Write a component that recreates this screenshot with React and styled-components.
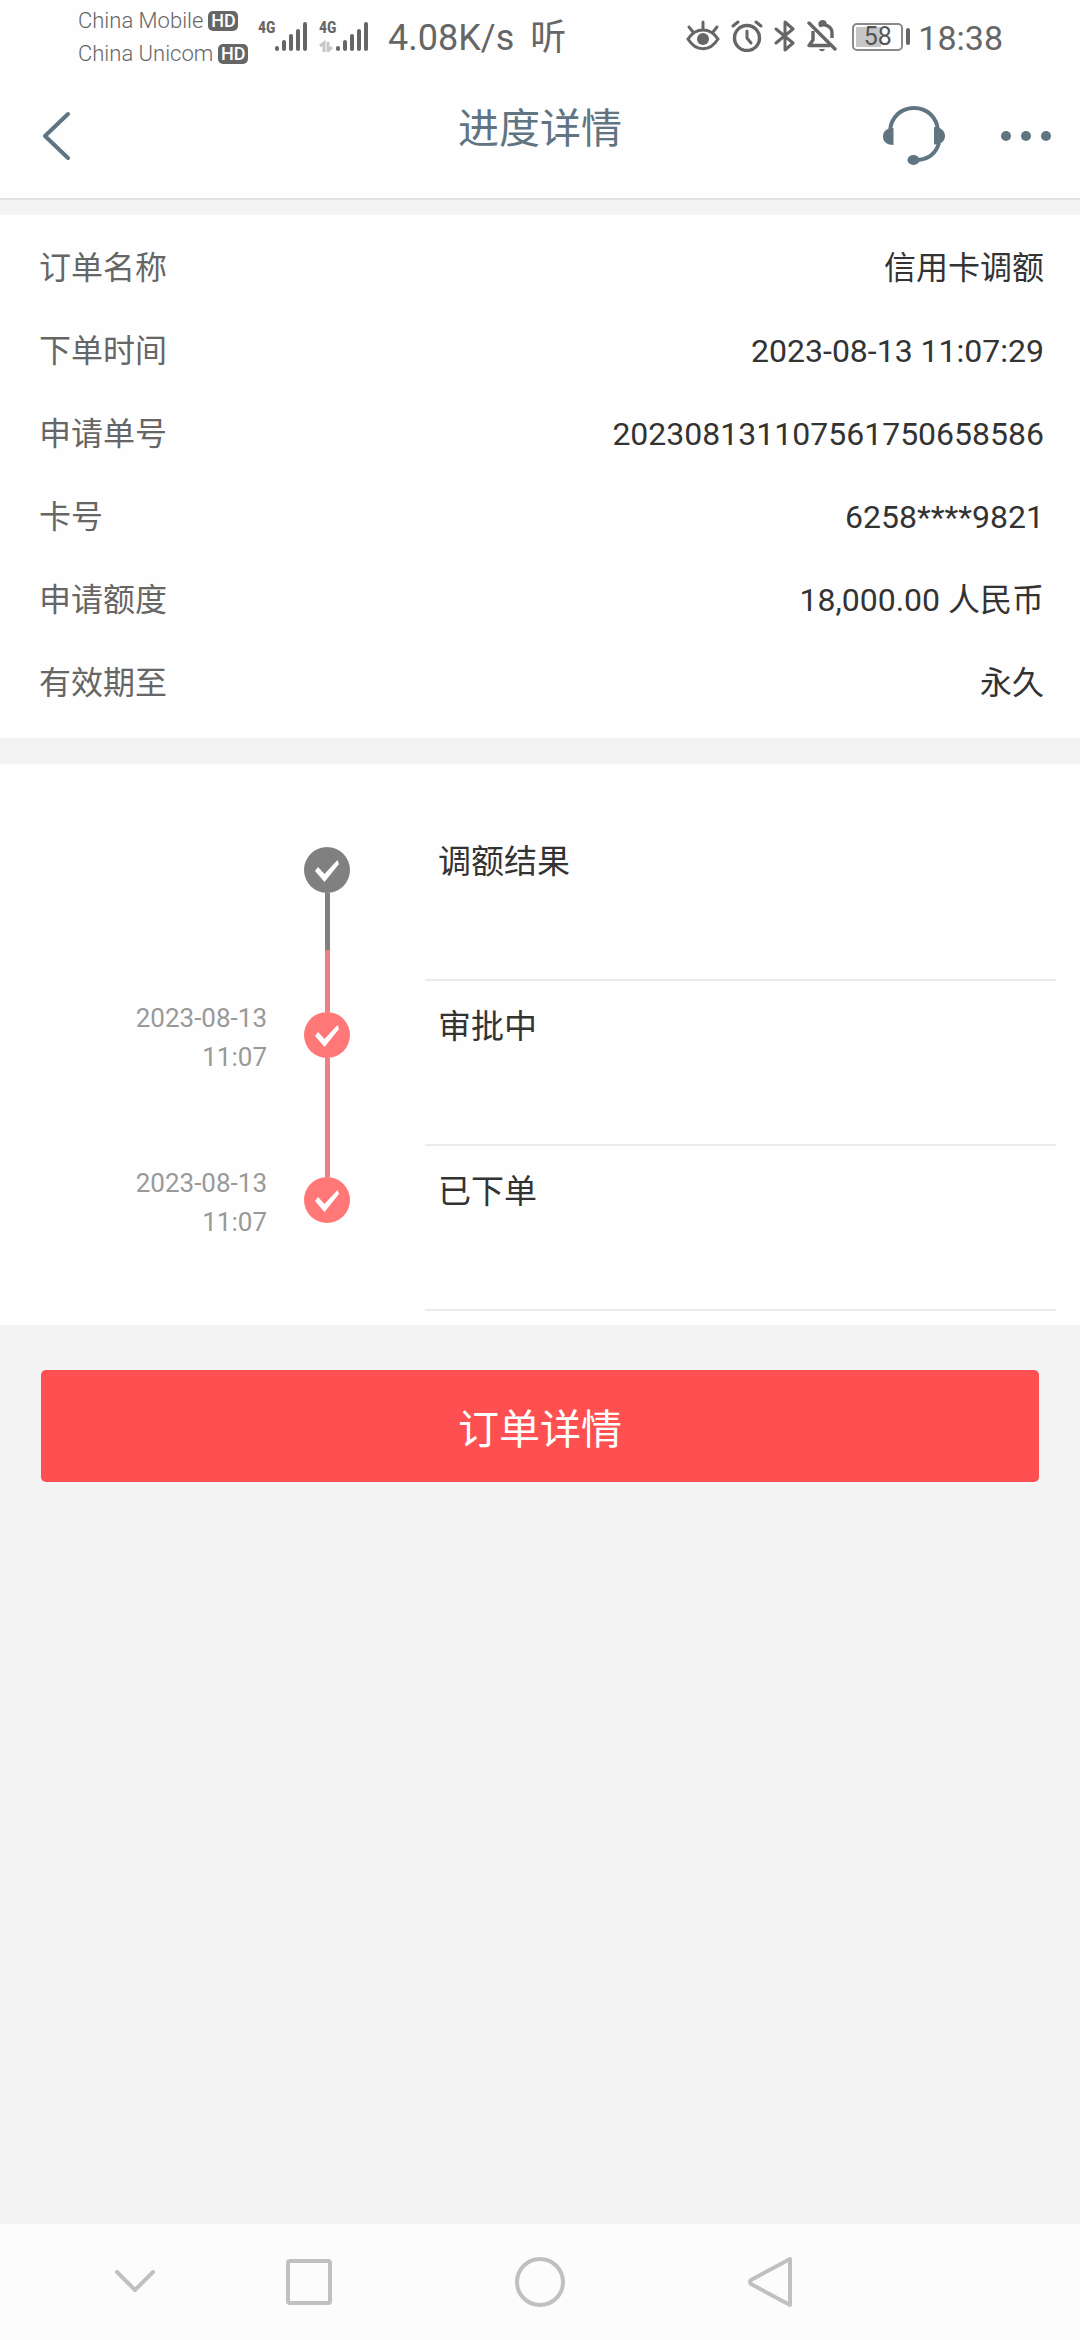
import React from "react"
import styled, { createGlobalStyle } from "styled-components"

const details = [
  { label: "订单名称", value: "信用卡调额" },
  { label: "下单时间", value: "2023-08-13 11:07:29" },
  { label: "申请单号", value: "202308131107561750658586" },
  { label: "卡号", value: "6258****9821" },
  { label: "申请额度", value: "18,000.00 人民币" },
  { label: "有效期至", value: "永久" },
]

const steps = [
  { title: "调额结果", done: false },
  { title: "审批中", date: "2023-08-13", time: "11:07", done: true },
  { title: "已下单", date: "2023-08-13", time: "11:07", done: true },
]

const colors = {
  done: "#ff7777",
  line: "#ec7f84",
  pending: "#808080",
}

const SignalIcon = ({ data }) => (
  <svg width="51" height="32" viewBox="0 0 51 32" aria-hidden="true">
    {data && (
      <g stroke="#c6c6c6" strokeWidth="3" fill="none">
        <path d="M1 26l4-3v9M9 22v9l4-4" />
      </g>
    )}
    <g stroke="#666" strokeWidth="4" strokeLinecap="round">
      <path d="M19 29v-1M26 29v-7M33 29v-13M40 29v-18M47 29v-25" />
    </g>
  </svg>
)

const EyeIcon = () => (
  <svg width="34" height="32" viewBox="0 0 34 32" fill="none" aria-hidden="true">
    <g stroke="#666" strokeWidth="3" strokeLinecap="round">
      <path d="M17 2v6M3 7l4 5M31 7l-4 5" />
      <path d="M2 19C10 7 24 7 32 19C24 32 10 32 2 19Z" />
    </g>
    <circle cx="17" cy="19" r="6" fill="#666" />
  </svg>
)

const AlarmIcon = () => (
  <svg width="32" height="32" viewBox="0 0 32 32" fill="none" aria-hidden="true">
    <g stroke="#666" strokeWidth="3" strokeLinecap="round">
      <circle cx="16" cy="18" r="12.5" strokeWidth="3.4" />
      <path d="M2 6l5-4M30 6l-5-4" />
      <path d="M16 11v7l4 5" strokeLinejoin="round" />
    </g>
  </svg>
)

const BluetoothIcon = () => (
  <svg width="22" height="34" viewBox="0 0 22 34" fill="none" aria-hidden="true">
    <path
      d="M2 10L19 24L11 31V3L19 10L2 24"
      stroke="#666"
      strokeWidth="3"
      strokeLinecap="round"
      strokeLinejoin="round"
    />
  </svg>
)

const MuteIcon = () => (
  <svg width="30" height="32" viewBox="0 0 30 32" fill="none" aria-hidden="true">
    <g stroke="#666" strokeWidth="3.4">
      <path d="M2 3L28 29" strokeLinecap="round" />
      <path d="M6 11v9l-4 5.500h21" strokeLinejoin="round" />
      <path d="M12 6c5-3 13 0 13 7v5" />
      <path d="M13 4c0-3 5-3 5 0" />
    </g>
    <path d="M12 29h6c-1 3-5 3-6 0z" fill="#666" />
  </svg>
)

const HeadsetIcon = () => (
  <svg width="62" height="60" viewBox="0 0 62 60" fill="none" aria-hidden="true">
    <g stroke="#607482" strokeWidth="4">
      <path d="M7 25C8 11 18 2 31 2S54 11 55 25" />
      <path d="M56 37C53 47 46 53 35 54" />
    </g>
    <g fill="#607482">
      <path d="M10.500 22V39C4 39 0 36 0 30.500C0 25 4 22 10.500 22Z" />
      <path d="M51 21V38.500C58 38.500 62 35 62 30C62 25 58 21 51 21Z" />
      <ellipse cx="30.500" cy="54" rx="6" ry="5" />
    </g>
  </svg>
)

const CheckIcon = () => (
  <svg width="46" height="46" viewBox="0 0 46 46" aria-hidden="true">
    <path d="M11 24L14 20L20.500 27L33.500 13L35 17L20.500 35Z" fill="#fff" />
  </svg>
)

const StatusBar = () => (
  <Status>
    <Carriers>
      <Carrier>
        China Mobile <HdBadge>HD</HdBadge>
      </Carrier>
      <Carrier>
        China Unicom <HdBadge>HD</HdBadge>
      </Carrier>
    </Carriers>
    <Signals>
      <Signal>
        <Network>4G</Network>
        <SignalIcon />
      </Signal>
      <Signal>
        <Network>4G</Network>
        <SignalIcon data />
      </Signal>
    </Signals>
    <Readings>
      <span>4.08K/s</span>
      <span>听</span>
    </Readings>
    <StatusIcons>
      <EyeIcon />
      <AlarmIcon />
      <BluetoothIcon />
      <MuteIcon />
    </StatusIcons>
    <Battery>
      <BatteryBody>58</BatteryBody>
      <BatteryTip />
    </Battery>
    <Clock>18:38</Clock>
  </Status>
)

const Timeline = () => (
  <Steps>
    {steps.map((step, index) => {
      const last = index === steps.length - 1
      return (
        <Step key={step.title}>
          <StepDate>
            <span>{step.date}</span>
            <span>{step.time}</span>
          </StepDate>
          <Rail>
            <Segment $size={31} $color={index > 0 ? colors.line : "transparent"} />
            <Dot $color={step.done ? colors.done : colors.pending}>
              <CheckIcon />
            </Dot>
            {!last && (
              <>
                <Segment $size={57} $color={step.done ? colors.line : colors.pending} />
                <Segment $grow $color={colors.line} />
              </>
            )}
          </Rail>
          <StepTitle>{step.title}</StepTitle>
        </Step>
      )
    })}
  </Steps>
)

const App = () => {
  return (
    <Page>
      <GlobalStyle />
      <StatusBar />
      <Header>
        <BackButton aria-label="返回">
          <svg width="30" height="52" viewBox="0 0 30 52" fill="none">
            <path
              d="M26 4L3 26L26 48"
              stroke="#607482"
              strokeWidth="4"
              strokeLinecap="round"
              strokeLinejoin="round"
            />
          </svg>
        </BackButton>
        <Title>进度详情</Title>
        <Actions>
          <IconButton aria-label="客服">
            <HeadsetIcon />
          </IconButton>
          <IconButton aria-label="更多">
            <svg width="52" height="12" viewBox="0 0 52 12" fill="#607482">
              <circle cx="6" cy="6" r="5" />
              <circle cx="26" cy="6" r="5" />
              <circle cx="46" cy="6" r="5" />
            </svg>
          </IconButton>
        </Actions>
      </Header>
      <Main>
        <Details>
          {details.map((item) => (
            <Row key={item.label}>
              <Label>{item.label}</Label>
              <Value>{item.value}</Value>
            </Row>
          ))}
        </Details>
        <Timeline />
        <SubmitButton>订单详情</SubmitButton>
      </Main>
      <NavBar>
        <NavButton aria-label="收起">
          <svg width="42" height="26" viewBox="0 0 42 26">
            <path d="M3 3L21 21L39 3" />
          </svg>
        </NavButton>
        <NavButton aria-label="最近任务">
          <svg width="46" height="46" viewBox="0 0 46 46">
            <rect x="2" y="2" width="42" height="42" rx="2" />
          </svg>
        </NavButton>
        <NavButton aria-label="主屏幕">
          <svg width="50" height="50" viewBox="0 0 50 50">
            <circle cx="25" cy="25" r="23" />
          </svg>
        </NavButton>
        <NavButton aria-label="后退">
          <svg width="44" height="52" viewBox="0 0 44 52">
            <path d="M42 3V49L3 28Q1 26 3 24Z" />
          </svg>
        </NavButton>
      </NavBar>
    </Page>
  )
}

export default App

// Components

const GlobalStyle = createGlobalStyle`
  * {
    box-sizing: border-box;
  }
  body {
    margin: 0;
    background: #f3f3f3;
    font-family: Roboto, "Noto Sans CJK SC", sans-serif;
  }
  button {
    border: none;
    padding: 0;
    background: none;
    font-family: inherit;
    cursor: pointer;
  }
  svg {
    display: block;
    flex-shrink: 0;
  }
`
const Page = styled.div`
  min-height: 100vh;
  display: flex;
  flex-direction: column;
`
const Status = styled.div`
  display: flex;
  align-items: flex-start;
  height: 76px;
  padding-left: 78px;
  background: #fefefe;
  color: #666;
`
const Carriers = styled.div`
  width: 180px;
  padding-top: 4px;
`
const Carrier = styled.div`
  display: flex;
  align-items: center;
  gap: 5px;
  height: 33px;
  font-size: 22px;
  font-weight: 300;
  white-space: nowrap;
`
const HdBadge = styled.span`
  width: 30px;
  border-radius: 5px;
  background: #666;
  color: #fff;
  font-size: 18px;
  font-weight: 500;
  line-height: 20px;
  text-align: center;
`
const Signals = styled.div`
  display: flex;
  gap: 10px;
  padding-top: 20px;
`
const Signal = styled.div`
  display: grid;

  & > * {
    grid-area: 1 / 1;
  }
`
const Network = styled.span`
  font-family: "Roboto Condensed", Roboto, sans-serif;
  font-size: 16px;
  font-weight: 700;
  line-height: 16px;
`
const Readings = styled.div`
  display: flex;
  gap: 16px;
  margin-left: 18px;
  font-size: 36px;
  line-height: 76px;
`
const StatusIcons = styled.div`
  display: flex;
  align-items: center;
  gap: 11px;
  height: 72px;
  margin-left: auto;
`
const Battery = styled.div`
  display: flex;
  align-items: center;
  gap: 3px;
  height: 73px;
  margin-left: 15px;
`
const BatteryBody = styled.div`
  width: 51px;
  border: 2px solid #8a8a8a;
  border-radius: 5px;
  background: linear-gradient(90deg, #c6c6c6 58%, transparent 58%) content-box;
  padding: 2px;
  color: #555;
  font-size: 25px;
  line-height: 20px;
  text-align: center;
`
const BatteryTip = styled.div`
  width: 4px;
  height: 17px;
  border-radius: 2px;
  background: #666;
`
const Clock = styled.span`
  margin: 0 77px 0 8px;
  font-size: 34px;
  line-height: 76px;
`
const Header = styled.header`
  display: grid;
  grid-template-columns: 1fr auto 1fr;
  height: 124px;
  padding-bottom: 2px;
  border-bottom: 2px solid #e2e2e2;
  background: #fefefe;
`
const BackButton = styled.button`
  display: flex;
  align-items: center;
  justify-self: start;
  padding: 0 42px;
`
const Title = styled.h1`
  margin: 0;
  color: #607482;
  font-size: 41px;
  font-weight: 400;
  line-height: 106px;
`
const Actions = styled.div`
  display: flex;
  justify-content: flex-end;
  gap: 55px;
  padding-right: 28px;
`
const IconButton = styled.button`
  display: flex;
  align-items: center;
`
const Main = styled.main`
  flex: 1;
  padding-top: 15px;
`
const Details = styled.dl`
  margin: 0;
  padding: 12px 36px 13px 39px;
  background: #fefefe;
`
const Row = styled.div`
  display: flex;
  justify-content: space-between;
  font-size: 32px;
  line-height: 83px;
`
const Label = styled.dt`
  color: #666;
`
const Value = styled.dd`
  margin: 0;
  color: #333;
`
const Steps = styled.ol`
  margin: 26px 0 0;
  padding: 52px 24px 14px 0;
  background: #fefefe;
  list-style: none;
`
const Step = styled.li`
  display: grid;
  grid-template-columns: 267px 120px 1fr;
  height: 165px;
`
const StepDate = styled.div`
  display: flex;
  flex-direction: column;
  align-items: flex-end;
  padding-top: 18px;
  color: #999;
  font-size: 26px;
  line-height: 39px;
`
const Rail = styled.div`
  display: flex;
  flex-direction: column;
  align-items: center;
`
const Segment = styled.div`
  width: 5px;
  ${(props) => (props.$grow ? "flex: 1;" : `height: ${props.$size}px;`)}
  background: ${(props) => props.$color};
`
const Dot = styled.div`
  border-radius: 50%;
  background: ${(props) => props.$color};
`
const StepTitle = styled.div`
  margin-left: 38px;
  padding-left: 13px;
  border-bottom: 2px solid #ebebeb;
  color: #333;
  font-size: 33px;
  line-height: 92px;
`
const SubmitButton = styled.button`
  display: block;
  width: calc(100% - 82px);
  height: 112px;
  margin: 45px auto;
  border-radius: 5px;
  background: #fe5050;
  color: #fff;
  font-size: 41px;
`
const NavBar = styled.nav`
  display: grid;
  grid-template-columns: 118fr 230fr 230fr 230fr;
  height: 116px;
  padding: 0 18% 0 7%;
  background: #fcfcfc;
`
const NavButton = styled.button`
  display: flex;
  align-items: center;
  justify-content: center;

  svg {
    fill: none;
    stroke: #c0c0c0;
    stroke-width: 4;
    stroke-linejoin: round;
    stroke-linecap: round;
  }
`
